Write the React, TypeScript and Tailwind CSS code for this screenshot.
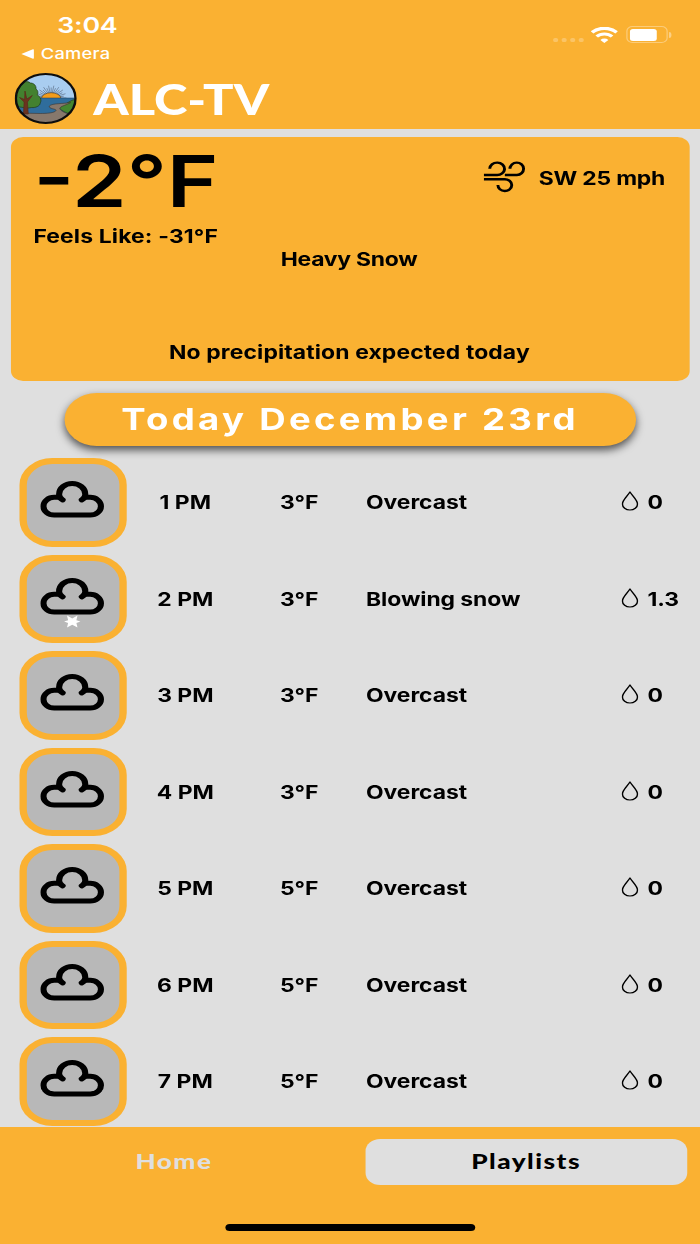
import { ReactNode } from 'react';

interface HourItem {
  time: string;
  temp: string;
  condition: string;
  amount: string;
  snow?: boolean;
}

const hours: HourItem[] = [
  { time: '1 PM', temp: '3°F', condition: 'Overcast', amount: '0' },
  { time: '2 PM', temp: '3°F', condition: 'Blowing snow', amount: '1.3', snow: true },
  { time: '3 PM', temp: '3°F', condition: 'Overcast', amount: '0' },
  { time: '4 PM', temp: '3°F', condition: 'Overcast', amount: '0' },
  { time: '5 PM', temp: '5°F', condition: 'Overcast', amount: '0' },
  { time: '6 PM', temp: '5°F', condition: 'Overcast', amount: '0' },
  { time: '7 PM', temp: '5°F', condition: 'Overcast', amount: '0' },
];

// sun ray angles in degrees, half circle above the horizon
const rays = Array.from({ length: 19 }, (_, i) => i * 10);

function Logo() {
  return (
    <svg viewBox="0 0 51 51" className="h-[51px] w-[51px]">
      <defs>
        <clipPath id="logo-clip">
          <circle cx="25.5" cy="25.5" r="24.5" />
        </clipPath>
      </defs>
      <g clipPath="url(#logo-clip)">
        <rect width="51" height="51" fill="#a9cdf0" />
        {rays.map((deg, i) => {
          const a = (deg * Math.PI) / 180;
          const r = i % 2 ? 10.5 : 12.5;
          return (
            <line
              key={deg}
              x1={30}
              y1={25}
              x2={30 + r * Math.cos(a)}
              y2={25 - r * Math.sin(a)}
              stroke="#4a5a70"
              strokeWidth="0.5"
            />
          );
        })}
        <ellipse cx="30" cy="25.5" rx="8" ry="5.8" fill="#f39c1c" stroke="#3a2c18" strokeWidth="0.5" />
        <rect y="25" width="51" height="17" fill="#2f6d9c" stroke="#1d3d58" strokeWidth="0.5" />
        <path d="M51 26C45 27 42 32 36 34.5C39 38 42 40 46 41L51 38Z" fill="#44862f" stroke="#23331c" strokeWidth="0.5" />
        <path
          d="M46 29.5C40 31 31 30 28.5 33C27.5 36 34 35.5 34 37.5C33 40 26 40.5 21 40.5L0 40V51H51V42C44 42 38 38.5 37 35.5C37.5 33 43 32 46 29.5Z"
          fill="#87786c"
          stroke="#3a322c"
          strokeWidth="0.5"
        />
        <path
          d="M3 15C5 9 10 7 13 10C16 10 18 13 17.5 16C20 18 19 21 18.5 22C22 24 22 28 21 30C21 33 17 35 14 34.5C10 36 6 34 4 34L0 32V18Z"
          fill="#43812f"
          stroke="#20381a"
          strokeWidth="0.6"
        />
        <path
          d="M7.2 41L7.8 29L4 24.5L8.2 26.5L8.5 18L10 26L14.5 22.5L10.5 29L11.2 41Z"
          fill="#6b3320"
          stroke="#5a2a1a"
          strokeWidth="0.6"
        />
      </g>
      <circle cx="25.5" cy="25.5" r="24.5" fill="none" stroke="#0d0d0d" strokeWidth="2" />
    </svg>
  );
}

function StatusIcons() {
  return (
    <div className="flex items-center text-white">
      <div className="mt-[11px] flex gap-[2.5px] opacity-25">
        <span className="h-[4.5px] w-[4.5px] rounded-[1.5px] bg-white" />
        <span className="h-[4.5px] w-[4.5px] rounded-[1.5px] bg-white" />
        <span className="h-[4.5px] w-[4.5px] rounded-[1.5px] bg-white" />
        <span className="h-[4.5px] w-[4.5px] rounded-[1.5px] bg-white" />
      </div>
      <svg viewBox="0 0 22 16" className="ml-[6px] h-4 w-[22px]" fill="none" stroke="currentColor">
        <path d="M0.9 5.4A14.5 14.5 0 0 1 21.1 5.4" strokeWidth="3.2" />
        <path d="M4.7 9.5A8.9 8.9 0 0 1 17.3 9.5" strokeWidth="3" />
        <path d="M11 16L7.7 12.9A4.5 4.5 0 0 1 14.3 12.9Z" fill="currentColor" stroke="none" />
      </svg>
      <div className="ml-[7px] h-[17px] w-[33.5px] rounded-[5px] border-[1.5px] border-white/35 p-[1.5px]">
        <div className="h-full w-[22px] rounded-[2.5px] bg-white" />
      </div>
      <div className="ml-[1.5px] h-[6px] w-[2px] rounded-r-full bg-white/40" />
    </div>
  );
}

function WindIcon() {
  return (
    <svg viewBox="0 0 34 32" className="h-8 w-[34px]" fill="none" stroke="black" strokeWidth="2.4">
      <path d="M0 14H10.6A6.1 6.2 0 1 0 4.9 7.8" />
      <path d="M17.3 14H27.2A5.6 6.2 0 1 0 21.5 7.8" />
      <path d="M0 18.2H17.2A5.7 5.9 0 1 1 11.6 24" />
    </svg>
  );
}

function CloudIcon({ snow }: { snow?: boolean }) {
  return (
    <svg viewBox="0 0 53 50" className="h-[50px] w-[53px]" fill="none" stroke="black">
      <path
        d="M16 16.3H11.5A8.85 8.85 0 0 0 11.5 34H41A8.85 8.85 0 0 0 41 16.3H36.5"
        strokeWidth="5"
      />
      <path
        d="M18.4 18.8C16 17.3 15.5 15.5 15.5 13.2A10.75 10.7 0 0 1 37 13.2C37 15.5 36.5 17.3 34.1 18.8"
        strokeWidth="5"
        strokeLinecap="round"
      />
      {snow && (
        <path
          d="M26.3 40.6L30.6 37.6L29.7 42.2L33 43.6L29.7 45L30.6 49.6L26.3 46.8L22 49.6L22.9 45L19.6 43.6L22.9 42.2L22 37.6Z"
          fill="white"
          stroke="none"
        />
      )}
    </svg>
  );
}

function DropIcon() {
  return (
    <svg viewBox="0 0 14 20" className="mb-[2px] h-5 w-[14px]" fill="none" stroke="black" strokeWidth="1.2">
      <path d="M7 1C4.5 5.5 0.8 9.2 0.8 13A6.2 6 0 0 0 13.2 13C13.2 9.2 9.5 5.5 7 1Z" strokeLinejoin="round" />
    </svg>
  );
}

function HourRow({ item }: { item: HourItem }) {
  return (
    <div className="flex h-[88.5px] items-center text-[18.8px] font-bold tracking-[-0.05px]">
      <div className="ml-[15.6px] flex h-[88.5px] w-[88.7px] items-end justify-center rounded-[27px] border-[6.5px] border-[#fab132] bg-[#b8b8b8] pb-[9.5px]">
        <CloudIcon snow={item.snow} />
      </div>
      <div className="mt-[2px] ml-[17.3px] w-[61px] text-center tracking-normal">{item.time}</div>
      <div className="mt-[2px] ml-[31px] w-[64px] text-center">{item.temp}</div>
      <div className="mt-[2px] ml-[22.8px] w-[210px]">{item.condition}</div>
      <DropIcon />
      <div className="mt-[2px] ml-[7px]">{item.amount}</div>
    </div>
  );
}

function TabButton({ active, children }: { active?: boolean; children: ReactNode }) {
  return (
    <button
      className={`h-[46px] w-[264.5px] rounded-[12px] font-['Lato',sans-serif] text-[21.5px] font-black tracking-[1.2px] ${
        active ? 'bg-[#dfdfdf] text-black' : 'text-[#dfdfdf]'
      }`}
    >
      {children}
    </button>
  );
}

export default function App() {
  return (
    <div className="h-[1244px] w-[700px] overflow-hidden bg-[#dfdfdf]">
      {/* the screen is 574.5 wide and stretched to fill the window */}
      <div className="flex h-[1244px] w-[574.5px] origin-top-left scale-x-[1.2185] flex-col font-['Inter',sans-serif] text-black">
        {/* header */}
        <header className="h-[128.5px] shrink-0 bg-[#fab132] text-white">
          <div className="flex h-[73px] justify-between pr-[23.5px] pl-[17px]">
            <div>
              <div className="mt-[12px] ml-[30px] text-[22px] leading-[26px] font-semibold tracking-[-0.2px]">3:04</div>
              <div className="mt-[7px] flex items-center gap-[5.5px] text-[15px] leading-[18px] font-medium">
                <svg viewBox="0 0 11 10" className="h-[10px] w-[11px]" fill="white">
                  <path d="M0.5 5L10 0.3Q10.8 0 10.8 1V9Q10.8 10 10 9.7Z" />
                </svg>
                <span className="tracking-[0.2px]">Camera</span>
              </div>
            </div>
            <div className="mt-[26px] h-[17px]">
              <StatusIcons />
            </div>
          </div>
          <div className="flex h-[51px] items-center pl-[12px]">
            <Logo />
            <h1 className="mt-[2px] ml-[13.5px] font-['Lato',sans-serif] text-[41.5px] leading-[51px] font-black">
              ALC-TV
            </h1>
          </div>
        </header>

        {/* current weather */}
        <section className="mx-[8.6px] mt-[8.5px] h-[244px] shrink-0 rounded-[10px] bg-[#fab132] text-[18.8px] leading-[23px] font-bold">
          <div className="flex justify-between pr-[20px] pl-[18.8px]">
            <div>
              <div className="mt-[8px] text-[72px] leading-[72px] font-semibold">-2°F</div>
              <div className="mt-[8px] tracking-[0.12px]">Feels Like: -31°F</div>
            </div>
            <div className="mt-[24px] flex h-8 items-center gap-[11.5px]">
              <WindIcon />
              <span className="mt-[2px] tracking-[-0.15px]">SW 25 mph</span>
            </div>
          </div>
          <div className="pr-[1.5px] text-center tracking-[-0.2px]">Heavy Snow</div>
          <div className="mt-[70px] pr-[1px] text-center tracking-[0.1px]">No precipitation expected today</div>
        </section>

        {/* date */}
        <div className="mx-auto mt-[12px] h-[52.5px] w-[469.5px] shrink-0 rounded-full bg-[#fab132] text-center text-[30px] leading-[52px] font-bold tracking-[2.7px] text-white shadow-[0_4px_8px_rgba(0,0,0,0.65)]">
          Today December 23rd
        </div>

        {/* hourly list */}
        <div className="mt-[12.5px] flex min-h-0 flex-1 flex-col gap-[8px] overflow-hidden">
          {hours.map((item) => (
            <HourRow key={item.time} item={item} />
          ))}
        </div>

        {/* bottom tabs */}
        <nav className="flex h-[117px] shrink-0 flex-col items-center bg-[#fab132]">
          <div className="mt-[11.5px] flex w-full justify-between px-[10.5px]">
            <TabButton>Home</TabButton>
            <TabButton active>Playlists</TabButton>
          </div>
          <div className="mt-[39px] h-[7.5px] w-[205px] rounded-full bg-black" />
        </nav>
      </div>
    </div>
  );
}
